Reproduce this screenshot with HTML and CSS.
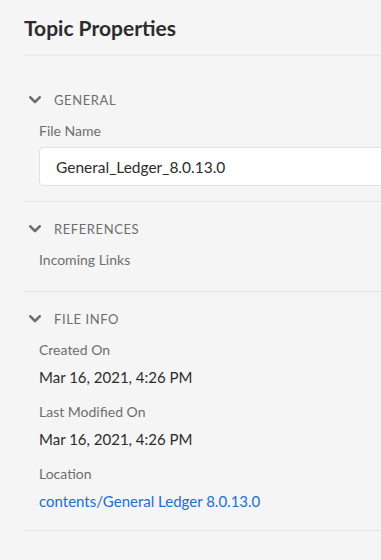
FILE: index.html
```html
<!DOCTYPE html>
<html lang="en">
<head>
<meta charset="utf-8">
<title>Topic Properties</title>
<link rel="stylesheet" href="styles.css">
</head>
<body>
<div class="panel">
  <h1 class="title">Topic Properties</h1>

  <section class="section section-first">
    <h2 class="heading">
      <svg class="chevron" width="12" height="8" viewBox="0 0 12 8" aria-hidden="true"><path d="M1.3 1.3 L6 6 L10.7 1.3" fill="none" stroke="currentColor" stroke-width="2.6" stroke-linecap="round" stroke-linejoin="round"/></svg>
      <span>GENERAL</span>
    </h2>
    <div class="body">
      <div class="label">File Name</div>
      <div class="input">General_Ledger_8.0.13.0</div>
    </div>
  </section>

  <section class="section">
    <h2 class="heading">
      <svg class="chevron" width="12" height="8" viewBox="0 0 12 8" aria-hidden="true"><path d="M1.3 1.3 L6 6 L10.7 1.3" fill="none" stroke="currentColor" stroke-width="2.6" stroke-linecap="round" stroke-linejoin="round"/></svg>
      <span>REFERENCES</span>
    </h2>
    <div class="body">
      <div class="label label-solo">Incoming Links</div>
    </div>
  </section>

  <section class="section">
    <h2 class="heading">
      <svg class="chevron" width="12" height="8" viewBox="0 0 12 8" aria-hidden="true"><path d="M1.3 1.3 L6 6 L10.7 1.3" fill="none" stroke="currentColor" stroke-width="2.6" stroke-linecap="round" stroke-linejoin="round"/></svg>
      <span>FILE INFO</span>
    </h2>
    <div class="body fields">
      <div class="field">
        <div class="label">Created On</div>
        <div class="value">Mar 16, 2021, 4:26 PM</div>
      </div>
      <div class="field">
        <div class="label">Last Modified On</div>
        <div class="value">Mar 16, 2021, 4:26 PM</div>
      </div>
      <div class="field">
        <div class="label">Location</div>
        <a class="value link" href="#">contents/General Ledger 8.0.13.0</a>
      </div>
    </div>
  </section>
</div>
</body>
</html>
```

FILE: styles.css
```css
html, body {
  margin: 0;
  padding: 0;
}
body {
  background: #f5f5f5;
  font-family: Lato, "Open Sans", "Liberation Sans", sans-serif;
  overflow: hidden;
}
.panel {
  padding-left: 24px;
  overflow: hidden;
}
.title {
  margin: 0;
  padding: 14px 0 12px;
  font-size: 21px;
  line-height: 28px;
  font-weight: 700;
  color: #2c2c2c;
  border-bottom: 2px solid #ebebeb;
}
.section {
  padding: 17px 0 17px;
  border-bottom: 1px solid #e3e3e3;
}
.section-first {
  padding-top: 34px;
  padding-bottom: 15px;
}
.heading {
  margin: 0 0 11px;
  display: flex;
  align-items: center;
  gap: 13px;
  padding-left: 5px;
  font-size: 13px;
  line-height: 20px;
  font-weight: 400;
  letter-spacing: 0.045em;
  color: #6e6e6e;
}
.chevron {
  color: #6e6e6e;
  flex: none;
}
.body {
  padding-left: 15px;
}
.label {
  font-size: 14px;
  line-height: 20px;
  color: #6e6e6e;
}
.label-solo {
  margin-bottom: 4px;
}
.input {
  margin-top: 6px;
  width: 380px;
  box-sizing: border-box;
  height: 39px;
  border: 1px solid #e1e1e1;
  border-radius: 4px;
  background: #ffffff;
  padding: 0 16px;
  display: flex;
  align-items: center;
  font-size: 15.5px;
  color: #2c2c2c;
}
.fields {
  display: flex;
  flex-direction: column;
  gap: 13px;
}
.field {
  display: flex;
  flex-direction: column;
  gap: 5px;
}
.value {
  font-size: 15px;
  line-height: 24px;
  color: #2c2c2c;
}
.link {
  color: #1a6fd4;
  text-decoration: none;
}
```
